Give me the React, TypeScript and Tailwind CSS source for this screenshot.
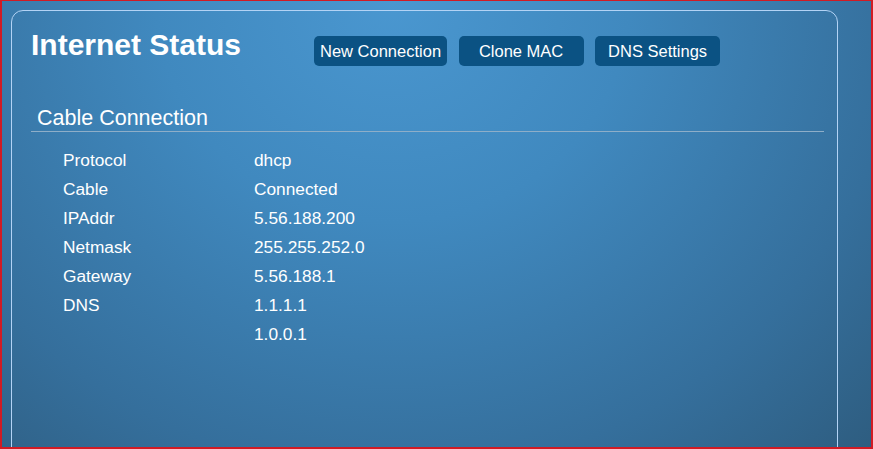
const rows: [string, string][] = [
  ['Protocol', 'dhcp'],
  ['Cable', 'Connected'],
  ['IPAddr', '5.56.188.200'],
  ['Netmask', '255.255.252.0'],
  ['Gateway', '5.56.188.1'],
  ['DNS', '1.1.1.1'],
  ['', '1.0.0.1'],
];

const buttons = ['New Connection', 'Clone MAC', 'DNS Settings'];

export default function App() {
  return (
    <div
      className="h-[449px] w-full overflow-hidden border-t border-l-2 border-r-2 border-b-2 border-[#d11b24] bg-[radial-gradient(ellipse_at_45%_0%,#4a97d0_0%,#4089bf_35%,#356f9c_75%,#2e5d80_100%)] pl-[9px] pt-[9px] text-white"
      style={{ fontFamily: '"Liberation Sans", Arial, sans-serif' }}
    >
      <div className="h-[480px] w-[827px] rounded-[12px] border border-[#b3d3f5] pl-[19px] pt-[17px]">
        <div className="flex items-start">
          <h1 className="w-[283px] text-[30px] font-bold leading-[34px]">Internet Status</h1>
          <div className="mt-[8px] flex gap-[11.5px]">
            {buttons.map((b) => (
              <button
                key={b}
                className="h-[30px] min-w-[125px] rounded-[5px] bg-[#0b5283] px-[6px] text-[16.5px] leading-[30px] text-white"
              >
                {b}
              </button>
            ))}
          </div>
        </div>

        <div className="mt-[39px] w-[793px] border-b border-[#8eaec8] pl-[6px] text-[21.5px] leading-[26px]">
          Cable Connection
        </div>

        <div className="mt-[14px] pl-[32px] text-[17.3px] leading-[29px]">
          {rows.map(([k, v], i) => (
            <div key={i} className="flex">
              <div className="w-[191px]">{k}</div>
              <div>{v}</div>
            </div>
          ))}
        </div>
      </div>
    </div>
  );
}
